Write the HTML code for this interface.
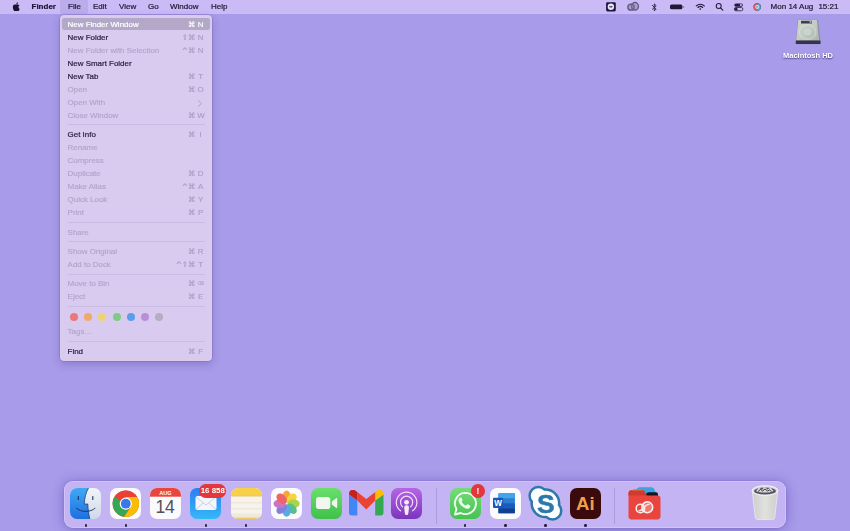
<!DOCTYPE html>
<html><head><meta charset="utf-8">
<style>
*{margin:0;padding:0;box-sizing:border-box}
html,body{width:850px;height:531px;overflow:hidden}
body{background:#a89bea;font-family:"Liberation Sans",sans-serif;position:relative;color:#241a3a}
#bar{position:absolute;left:0;top:0;width:850px;height:14px;background:#cabbf7}
#bar .m{position:absolute;top:0;height:14px;line-height:14px;font-size:8px;color:#1d1533;white-space:nowrap;-webkit-text-stroke:.2px #1d1533}
#bar .sel{position:absolute;left:59.800px;top:0;width:28.700px;height:14px;background:#bbadec;border-radius:0 0 2px 2px}
#menu{position:absolute;left:59.600px;top:15.300px;width:152.800px;height:345.300px;background:#d9caef;border-radius:4px;box-shadow:0 3px 8px rgba(60,40,120,.28),0 0 0 .5px rgba(90,70,150,.35)}
#menu .r{position:absolute;left:8px;right:8px;height:12px;line-height:12px;font-size:7.950px;color:#2a2040;white-space:nowrap;-webkit-text-stroke:.2px #2a2040}
#menu .r.d{color:#b0a4cb;-webkit-text-stroke:.15px #b0a4cb}
#menu .r .k{position:absolute;right:.2px;top:0;color:#a79bc4;-webkit-text-stroke:.12px #a79bc4;letter-spacing:.3px}
#menu .r .k .c{font-family:"DejaVu Sans",sans-serif;font-size:7.400px;position:relative;top:0;letter-spacing:0}
#menu .r .k .l{display:inline-block;width:7px;text-align:center;margin-left:1.800px;letter-spacing:0}
#menu .r .k .l.bs{font-family:"DejaVu Sans",sans-serif;font-size:4.600px;position:relative;top:-.6px}
#menu .r .ch{position:absolute;right:2.600px;top:2.700px;color:#a79bc4}
#menu .hlb{position:absolute;left:2.600px;right:2.400px;top:2.600px;height:12.300px;background:#b3a8c8;border-radius:2.500px}
#menu .r.hl{color:#fff;-webkit-text-stroke:.2px #fff}
#menu .r.hl .k{color:#fff;-webkit-text-stroke:.15px #fff}
#menu .s{position:absolute;left:8px;right:7px;height:1px;background:#c9bbe3}
.dot{position:absolute;width:8px;height:8px;border-radius:50%;top:297px}

#hdl{position:absolute;left:768px;width:80px;top:50px;text-align:center;font-size:7.500px;font-weight:bold;color:#fff;line-height:11px;text-shadow:0 .5px 1.5px rgba(40,30,90,.8)}
#dock{position:absolute;left:64px;top:481.200px;width:722.400px;height:46.600px;border-radius:9px;background:#c5b4f4;box-shadow:inset 0 0 0 .8px rgba(225,215,255,.55),0 0 0 .5px rgba(120,100,200,.35),0 1px 12px rgba(70,50,160,.48)}
#dk{position:absolute;left:0;top:0;width:850px;height:531px}
#dk .i{position:absolute;width:31px;height:31px;top:487.600px;border-radius:7px;overflow:hidden}
#dk .p{position:absolute;width:2.400px;height:2.400px;border-radius:50%;background:#2a2145;top:524.400px}
#dk .sp{position:absolute;width:1px;background:#ab9be0;top:487.500px;height:36px}
#bar,#menu,#dk,#hdl,#hdi{filter:blur(.35px)}
</style></head><body>
<div style="position:absolute;left:0;top:0;width:850px;height:13px;background:#cabbf7"></div>
<div id="bar">
<div class="sel"></div>
<svg style="position:absolute;left:11.500px;top:1.700px" width="8.500" height="9.600" viewBox="0 0 170 170" preserveAspectRatio="none"><path fill="#1a1330" d="M150.37 130.25c-2.45 5.66-5.35 10.87-8.71 15.66-4.58 6.53-8.33 11.05-11.22 13.56-4.48 4.12-9.28 6.23-14.42 6.35-3.69 0-8.14-1.05-13.32-3.18-5.197-2.12-9.973-3.17-14.34-3.17-4.58 0-9.492 1.05-14.746 3.17-5.262 2.13-9.501 3.24-12.742 3.35-4.929.21-9.842-1.96-14.746-6.52-3.13-2.73-7.045-7.41-11.735-14.04-5.032-7.08-9.169-15.29-12.41-24.65-3.471-10.11-5.211-19.9-5.211-29.378 0-10.857 2.346-20.221 7.045-28.068 3.693-6.303 8.606-11.275 14.755-14.925s12.793-5.51 19.948-5.629c3.915 0 9.049 1.211 15.429 3.591 6.362 2.388 10.447 3.599 12.238 3.599 1.339 0 5.877-1.416 13.57-4.239 7.275-2.618 13.415-3.702 18.445-3.275 13.63 1.1 23.87 6.473 30.68 16.153-12.19 7.386-18.22 17.731-18.1 31.002.11 10.337 3.86 18.939 11.23 25.769 3.34 3.17 7.07 5.62 11.22 7.36-.9 2.61-1.85 5.11-2.86 7.51zM119.11 7.24c0 8.102-2.96 15.667-8.86 22.669-7.12 8.324-15.732 13.134-25.071 12.375a25.222 25.222 0 0 1-.188-3.07c0-7.778 3.386-16.102 9.399-22.908 3.002-3.446 6.820-6.311 11.45-8.597 4.62-2.252 8.99-3.497 13.1-3.71.12 1.083.17 2.166.17 3.240z"/></svg>
<div class="m" style="left:31.5px;font-weight:bold">Finder</div>
<div class="m" style="left:68px">File</div>
<div class="m" style="left:93px">Edit</div>
<div class="m" style="left:119px">View</div>
<div class="m" style="left:148px">Go</div>
<div class="m" style="left:170px">Window</div>
<div class="m" style="left:211px">Help</div>
<!-- status icons -->
<svg style="position:absolute;left:600px;top:0" width="170" height="14" viewBox="600 0 170 14">
 <!-- teamviewer -->
 <rect x="606.100" y="2.200" width="9.700" height="9.200" rx="1.300" fill="#1d1740"/>
 <circle cx="610.900" cy="6.800" r="3.200" fill="#ece6fc"/>
 <path d="M609 6.800l1.300-1v.6h1.200v-.6l1.300 1-1.300 1v-.6h-1.200v.6z" fill="#1d1740"/>
 <!-- creative cloud -->
 <g fill="none" stroke="#625983" stroke-width="1.5"><ellipse cx="631" cy="7.200" rx="3.100" ry="2.900"/><ellipse cx="635" cy="6.300" rx="3.400" ry="3.700"/></g>
 <ellipse cx="633.200" cy="6.600" rx="5.600" ry="3.900" fill="#7d7399" opacity=".4"/>
 <!-- bluetooth -->
 <path d="M652.4 5.4l3.8 3.6-1.9 1.9V3.9l1.9 1.8-3.8 3.5" fill="none" stroke="#2a2246" stroke-width=".9" stroke-linejoin="round" stroke-linecap="round"/>
 <!-- battery -->
 <rect x="670" y="4.500" width="12.400" height="4.800" rx="1.500" fill="#1f1838"/>
 <rect x="683" y="5.900" width="1.200" height="2" rx=".5" fill="#8d82ae"/>
 <!-- wifi -->
 <g fill="none" stroke="#241c3e" stroke-width="1.15" stroke-linecap="round"><path d="M696.300 5.900a5.600 5.600 0 0 1 8 0"/><path d="M698 7.500a3.300 3.300 0 0 1 4.600 0"/></g>
 <circle cx="700.300" cy="9" r=".85" fill="#241c3e"/>
 <!-- search -->
 <circle cx="718.700" cy="6" r="2.500" fill="none" stroke="#241c3e" stroke-width="1.050"/>
 <path d="M720.500 7.900l2.300 2.300" stroke="#241c3e" stroke-width="1.2" stroke-linecap="round"/>
 <!-- control centre -->
 <rect x="734.3" y="3.4" width="8.6" height="3.3" rx="1.65" fill="#241c3e"/>
 <circle cx="740.9" cy="5.05" r="1.05" fill="#cbbdf6"/>
 <rect x="734.3" y="7.5" width="8.6" height="3.3" rx="1.65" fill="none" stroke="#241c3e" stroke-width=".8"/>
 <circle cx="736.2" cy="9.15" r="1.3" fill="#241c3e"/>
 <!-- siri -->
 <circle cx="757.2" cy="6.9" r="3.7" fill="#2a2b55"/>
 <path d="M753.7 6.9a3.5 3.5 0 0 1 3.5-3.5v7a3.5 3.5 0 0 1-3.500-3.500z" fill="#e8565f"/>
 <path d="M757.2 3.400a3.500 3.500 0 0 1 3.500 3.500 3.500 3.500 0 0 1-3.500 3.500z" fill="#39b8c8"/>
 <circle cx="757.2" cy="6.900" r="1.900" fill="#e9e4fa"/>
 <path d="M756.500 5.800l1.900 1.100-1.900 1.100z" fill="#3a78c8"/>
</svg>
<div class="m" style="left:770.6px">Mon 14 Aug</div>
<div class="m" style="left:818.4px">15:21</div>
</div>

<!-- desktop icon -->
<svg id="hdi" style="position:absolute;left:790px;top:16px" width="36" height="32" viewBox="790 16 36 32">
 <defs><linearGradient id="hdg" x1="0" y1="0" x2="1" y2="1"><stop offset="0" stop-color="#cdd5cd"/><stop offset=".5" stop-color="#c3ccc4"/><stop offset="1" stop-color="#a9b4ad"/></linearGradient></defs>
 <path d="M797.800 19.800h20.300l2.400 21.200v2.300a1 1 0 0 1-1 1h-22.700a1 1 0 0 1-1-1v-2.300z" fill="#8f8caa"/>
 <path d="M798.300 20.100h18.600l2.200 20.500h-22.900z" fill="url(#hdg)"/>
 <rect x="801" y="20.800" width="11" height="2.700" fill="#3f3d50"/>
 <rect x="809.500" y="21.300" width="2" height="1.300" fill="#d8d8e0"/>
 <ellipse cx="807.600" cy="32" rx="8.300" ry="7.300" fill="none" stroke="#e4eae4" stroke-width=".8" opacity=".7"/>
 <ellipse cx="807.600" cy="32" rx="3" ry="2.600" fill="#ccd4cd" stroke="#e6ece7" stroke-width=".5" opacity=".8"/>
 <rect x="795.800" y="40.500" width="24.700" height="3.600" rx=".6" fill="#35324c"/>
</svg>
<div id="hdl">Macintosh HD</div>
<!-- dock -->
<div id="dock"></div>
<div id="dk">
<!-- finder -->
<svg class="i" style="left:70.1px" viewBox="0 0 31 31">
 <defs><linearGradient id="fA" x1="0" y1="0" x2="0" y2="1"><stop offset="0" stop-color="#3fa9f5"/><stop offset="1" stop-color="#1f6fe0"/></linearGradient>
 <linearGradient id="fB" x1="0" y1="0" x2="0" y2="1"><stop offset="0" stop-color="#f2f4f8"/><stop offset="1" stop-color="#cfd9ea"/></linearGradient></defs>
 <rect width="31" height="31" fill="url(#fB)"/>
 <path d="M0 0h18.500c-2.500 4.500-4 10-4.300 16h3.600c.2 5 .8 10 2 15H0z" fill="url(#fA)"/>
 <path d="M18.500 0c-2.500 4.500-4 10-4.300 16h3.600c.2 5 .8 10 2 15" fill="none" stroke="#1c2f55" stroke-width=".7"/>
 <path d="M6.500 20.300c4.500 4.200 14 4.200 18.500 0" fill="none" stroke="#1c2f55" stroke-width=".9" stroke-linecap="round"/>
 <path d="M8.300 8.600v2.800M22.800 8.600v2.800" stroke="#1c2f55" stroke-width="1.100" stroke-linecap="round"/>
</svg>
<!-- chrome -->
<svg class="i" style="left:110.200px" viewBox="0 0 31 31">
 <rect width="31" height="31" fill="#fbfbfd"/>
 <g transform="translate(15.800 15.700)">
  <circle r="13.2" fill="#e94235"/>
  <path d="M0 0L-11.43 -6.60A13.2 13.2 0 0 0 -1.700 13.10L5.200 3z" fill="#34a853"/>
  <path d="M0 0L5.200 3-1.700 13.10A13.2 13.2 0 0 0 11.43 -6.60H0z" fill="#fbbc04"/>
  <path d="M-11.43 -6.60A13.2 13.2 0 0 1 11.43 -6.60H0z" fill="#e94235"/>
  <circle r="6.100" fill="#fff"/>
  <circle r="4.900" fill="#3b78e7"/>
 </g>
</svg>
<!-- calendar -->
<svg class="i" style="left:150.200px" viewBox="0 0 31 31">
 <rect width="31" height="31" fill="#fbfafc"/>
 <rect width="31" height="8.700" fill="#e8453f"/>
 <text x="15.500" y="7" font-family="Liberation Sans, sans-serif" font-weight="bold" font-size="5.600" fill="#fff" text-anchor="middle">AUG</text>
 <text x="15" y="25" font-family="Liberation Sans, sans-serif" font-size="17.500" fill="#505056" text-anchor="middle" letter-spacing="-.2">14</text>
</svg>
<!-- mail -->
<svg class="i" style="left:190.400px" viewBox="0 0 31 31">
 <defs><linearGradient id="mA" x1="0" y1="0" x2="0" y2="1"><stop offset="0" stop-color="#2e7df0"/><stop offset="1" stop-color="#35b8f8"/></linearGradient></defs>
 <rect width="31" height="31" fill="url(#mA)"/>
 <rect x="5.500" y="8" width="21" height="14" rx="2" fill="#f4f6fb"/>
 <path d="M6 9l10 8 10-8M6 21.500l7-6.500M26 21.500l-7-6.500" fill="none" stroke="#b9c6dc" stroke-width=".8"/>
</svg>
<div style="position:absolute;left:199.300px;top:484.400px;width:27px;height:13.600px;border-radius:6.800px;background:#e1373d;color:#fff;font-size:7.900px;font-weight:bold;line-height:13.800px;text-align:center;letter-spacing:0">16 858</div>
<!-- notes -->
<svg class="i" style="left:231px" viewBox="0 0 31 31">
 <rect width="31" height="31" fill="#f7f3ea"/>
 <rect width="31" height="8" fill="#f8cf48"/>
 <path d="M0 8.200h31" stroke="#e3c45a" stroke-width=".6"/>
 <path d="M0 14.800h31M0 20.800h31" stroke="#dcd6c8" stroke-width=".6"/>
 <rect y="25.500" width="31" height="5.500" fill="#efe9dc"/>
 <rect y="29.600" width="31" height="1.400" fill="#eccb62"/>
</svg>
<!-- photos -->
<svg class="i" style="left:270.800px" viewBox="0 0 31 31">
 <rect width="31" height="31" fill="#fbfbfd"/>
 <g transform="translate(15.600 15.700)" opacity=".93">
  <ellipse cx="0" cy="-7" rx="4.200" ry="6.100" fill="#f6a02c"/>
  <ellipse cx="0" cy="-7" rx="4.200" ry="6.100" fill="#f3d230" transform="rotate(45)"/>
  <ellipse cx="0" cy="-7" rx="4.200" ry="6.100" fill="#a5cf3c" transform="rotate(90)"/>
  <ellipse cx="0" cy="-7" rx="4.200" ry="6.100" fill="#4dbb7c" transform="rotate(135)"/>
  <ellipse cx="0" cy="-7" rx="4.200" ry="6.100" fill="#4aa5e0" transform="rotate(180)"/>
  <ellipse cx="0" cy="-7" rx="4.200" ry="6.100" fill="#7a78d8" transform="rotate(225)"/>
  <ellipse cx="0" cy="-7" rx="4.200" ry="6.100" fill="#c56bc0" transform="rotate(270)"/>
  <ellipse cx="0" cy="-7" rx="4.200" ry="6.100" fill="#ec5b5b" transform="rotate(315)"/>
 </g>
</svg>
<!-- facetime -->
<svg class="i" style="left:310.900px" viewBox="0 0 31 31">
 <defs><linearGradient id="ftA" x1="0" y1="0" x2="0" y2="1"><stop offset="0" stop-color="#6adf6c"/><stop offset="1" stop-color="#3fc14a"/></linearGradient></defs>
 <rect width="31" height="31" fill="url(#ftA)"/>
 <rect x="5" y="9" width="14.300" height="12" rx="2.800" fill="#f1f7ef"/>
 <path d="M20.800 13.600l4.300-3.300c.6-.4 1.100-.1 1.100.6v8.200c0 .7-.5 1-1.100.6l-4.300-3.300z" fill="#f1f7ef"/>
</svg>
<!-- gmail -->
<svg style="position:absolute;left:349.300px;top:490px" width="34.500" height="25.500" viewBox="0 0 34.500 25.500">
 <path d="M0 4.500v18.600a2.400 2.400 0 0 0 2.400 2.400h5.900V10.600z" fill="#4285f4"/>
 <path d="M34.500 4.500v18.600a2.400 2.400 0 0 1-2.400 2.400h-5.900V10.600z" fill="#34a853"/>
 <path d="M26.200 1.900v8.700l8.300-6.100V3.600c0-3.200-3.700-5-6.200-3.100z" fill="#fbbc04"/>
 <path d="M8.300 10.600V1.900l8.950 7 8.950-7v8.700l-8.950 8.800z" fill="#ea4335"/>
 <path d="M0 3.600v.9l8.300 6.100V1.900L6.200.5C3.700-1.400 0 .4 0 3.600z" fill="#c5221f"/>
</svg>
<!-- podcasts -->
<svg class="i" style="left:391.300px" viewBox="0 0 31 31">
 <defs><linearGradient id="pA" x1="0" y1="0" x2="0" y2="1"><stop offset="0" stop-color="#b764e6"/><stop offset="1" stop-color="#7b35bd"/></linearGradient></defs>
 <rect width="31" height="31" fill="url(#pA)"/>
 <g fill="none" stroke="#f0dcf8" stroke-width="1.250" stroke-linecap="round">
  <path d="M9.600 22.800a10.300 10.300 0 1 1 12 0"/>
  <path d="M11.500 18.800a6.100 6.100 0 1 1 8.200 0"/>
 </g>
 <circle cx="15.600" cy="14.300" r="2.400" fill="#f6ecfb"/>
 <path d="M13.200 19.600a2.400 2.400 0 0 1 4.800 0l-.7 5.800a1.700 1.700 0 0 1-3.400 0z" fill="#f6ecfb"/>
</svg>
<div class="sp" style="left:436.400px"></div>
<!-- whatsapp -->
<svg class="i" style="left:449.800px;top:488px" viewBox="0 0 31 31">
 <defs><linearGradient id="wA" x1="0" y1="0" x2="0" y2="1"><stop offset="0" stop-color="#74dc78"/><stop offset="1" stop-color="#46c352"/></linearGradient></defs>
 <rect width="31" height="31" fill="url(#wA)"/>
 <g transform="translate(15.500 15.500) scale(1.090) translate(-15.700 -15.300)"><path d="M15.700 5.600a9.700 9.700 0 0 0-8.300 14.700L6 25.400l5.300-1.400a9.700 9.700 0 1 0 4.400-18.400z" fill="none" stroke="#f2fbf1" stroke-width="1.700" stroke-linejoin="round"/>
 <path d="M12.300 10.600c-.4-.8-.7-.8-1.100-.8-.9 0-1.900 1-1.900 2.600 0 2.700 3.500 6.800 7.300 7.700 1.600.4 3-.5 3.400-1.600.2-.6.200-1 .1-1.200-.3-.4-2.200-1.300-2.600-1.300-.5 0-.8 1.100-1.300 1.200-.8.100-3.600-2.100-4-3.500-.1-.5.800-.9.800-1.500 0-.3-.5-1.200-.7-1.600z" fill="#f2fbf1"/></g>
</svg>
<div style="position:absolute;left:471px;top:484.200px;width:14px;height:14px;border-radius:7px;background:#e1373d;color:#fff;font-size:8.500px;font-weight:bold;line-height:14px;text-align:center">!</div>
<!-- word -->
<svg class="i" style="left:489.700px" viewBox="0 0 31 31">
 <rect width="31" height="31" fill="#fbfbfd"/>
 <rect x="8.400" y="5.300" width="16.500" height="20" rx="1.200" fill="#2b7cd3"/>
 <rect x="8.400" y="5.300" width="16.500" height="5" fill="#41a5ee"/>
 <rect x="8.400" y="15.300" width="16.500" height="5" fill="#185abd"/>
 <rect x="8.400" y="20.300" width="16.500" height="5" fill="#103f91"/>
 <rect x="3" y="9.800" width="10.200" height="10.200" rx="1" fill="#1b55b5"/>
 <text x="8.100" y="17.800" font-family="Liberation Sans, sans-serif" font-weight="bold" font-size="8.200" fill="#fff" text-anchor="middle">W</text>
</svg>
<!-- skype -->
<svg style="position:absolute;left:525px;top:483px" width="40" height="40" viewBox="525 483 40 40">
 <g fill="#2b78aa"><circle cx="545.400" cy="503.300" r="15"/><circle cx="538.300" cy="495.800" r="10"/><circle cx="552.500" cy="510.800" r="10"/></g>
 <g fill="#fcfdfe"><circle cx="545.400" cy="503.300" r="12.500"/><circle cx="538.300" cy="495.800" r="7.500"/><circle cx="552.500" cy="510.800" r="7.500"/></g>
 <text x="545.900" y="512.600" font-family="Liberation Sans, sans-serif" font-weight="bold" font-size="26.500" fill="#2b78aa" stroke="#2b78aa" stroke-width=".5" text-anchor="middle">S</text>
</svg>
<!-- illustrator -->
<svg class="i" style="left:570.400px;top:488px" viewBox="0 0 31 31">
 <rect width="31" height="31" fill="#3a0a0c"/>
 <text x="15.300" y="22" font-family="Liberation Sans, sans-serif" font-weight="bold" font-size="18.600" fill="#f0a046" text-anchor="middle">Ai</text>
</svg>
<div class="sp" style="left:614.300px"></div>
<!-- cc folder -->
<svg style="position:absolute;left:627.500px;top:486.500px" width="33" height="33" viewBox="0 0 33 33">
 <path d="M7.500 4c1-2.400 2.400-3.700 4.500-3.700h11c2 0 3 1 3.600 2.500l1.800 4.200H7.500z" fill="#3aa2dd"/>
 <path d="M17.500 7.800c.8-1.800 1.800-2.600 3.500-2.600h7c1.200 0 2 .9 2 2v3H17.500z" fill="#17161c"/>
 <path d="M.5 6c0-1.600 1.300-2.900 2.900-2.900h10.600c1.300 0 2 .5 2.700 1.500l2.200 3.900h11c1.600 0 2.600 1.300 2.600 2.900v18.200c0 1.600-1.300 2.900-2.900 2.900H3.400c-1.600 0-2.900-1.300-2.900-2.900z" fill="#e9443d"/>
 <path d="M3.500 4.500c.6-1.500 1.600-2.200 3-2.200h5.500c1.300 0 2 .5 2.700 1.500l1 1.800H3.500z" fill="#e27a35"/>
 <path d="M.5 8.500V6.500c0-1.600 1.300-2.900 2.900-2.900h10.600c1.300 0 2 .5 2.700 1.500l1.900 3.400z" fill="#cf3b31"/>
 <circle cx="19.300" cy="20.300" r="5.400" fill="#f3a49e" opacity=".55"/>
 <g fill="none" stroke="#fdeeee" stroke-width="1.600"><circle cx="12.400" cy="21.400" r="4.200"/><circle cx="19.300" cy="20.300" r="5.400"/><path d="M10.500 23.500c2.500.5 4-1 5.500-3s3-3.500 5.500-3" stroke-width="1.300"/></g>
</svg>
<!-- trash -->
<svg style="position:absolute;left:750px;top:483px" width="30" height="38" viewBox="0 0 30 38">
 <defs><linearGradient id="tA" x1="0" y1="0" x2="1" y2="0"><stop offset="0" stop-color="#cfd0c8"/><stop offset=".5" stop-color="#e3e4dc"/><stop offset="1" stop-color="#cfd0c8"/></linearGradient></defs>
 <path d="M2.200 7.500L5.200 34.200c.2 1.600 1.400 2.400 3 2.400h13.600c1.600 0 2.800-.8 3-2.400L27.800 7.500z" fill="url(#tA)" stroke="#f4f4f8" stroke-width=".7" opacity=".93"/>
 <ellipse cx="15" cy="7.500" rx="12.900" ry="4.800" fill="#d9dade" stroke="#f6f6fa" stroke-width=".9"/>
 <ellipse cx="15" cy="8" rx="11" ry="3.600" fill="#55545e"/>
 <path d="M6 8l3-3.500 3 2.500 2.500-3.500 3 3 3-2 3 3.500c-3 2-14 2-17.500 0z" fill="#d6d6dc"/>
 <path d="M8 8.500l2.500-2 2 1.500 2.500-2 2.500 2 2-1 2 1.500" fill="none" stroke="#3d3c48" stroke-width="1"/>
</svg>
<!-- indicators -->
<div class="p" style="left:84.500px"></div>
<div class="p" style="left:124.600px"></div>
<div class="p" style="left:204.600px"></div>
<div class="p" style="left:244.600px"></div>
<div class="p" style="left:464.100px"></div>
<div class="p" style="left:504.200px"></div>
<div class="p" style="left:544.200px"></div>
<div class="p" style="left:584.300px"></div>

</div>
<div id="menu">
<div class="hlb"></div>
<div class="r hl" style="top:3.70px">New Finder Window<span class="k"><span class="c">⌘</span><span class="l">N</span></span></div>
<div class="r " style="top:16.70px">New Folder<span class="k"><span class="c">⇧⌘</span><span class="l">N</span></span></div>
<div class="r d" style="top:29.70px">New Folder with Selection<span class="k"><span class="c">^⌘</span><span class="l">N</span></span></div>
<div class="r " style="top:42.70px">New Smart Folder</div>
<div class="r " style="top:55.70px">New Tab<span class="k"><span class="c">⌘</span><span class="l">T</span></span></div>
<div class="r d" style="top:68.70px">Open<span class="k"><span class="c">⌘</span><span class="l">O</span></span></div>
<div class="r d" style="top:81.70px">Open With<svg class="ch" width="4" height="7" viewBox="0 0 4 7"><path d="M.7 .7L3.200 3.500.7 6.300" fill="none" stroke="currentColor" stroke-width=".9" stroke-linecap="round" stroke-linejoin="round"/></svg></div>
<div class="r d" style="top:94.70px">Close Window<span class="k"><span class="c">⌘</span><span class="l">W</span></span></div>
<div class="r " style="top:113.70px">Get Info<span class="k"><span class="c">⌘</span><span class="l">I</span></span></div>
<div class="r d" style="top:126.70px">Rename</div>
<div class="r d" style="top:139.70px">Compress</div>
<div class="r d" style="top:152.70px">Duplicate<span class="k"><span class="c">⌘</span><span class="l">D</span></span></div>
<div class="r d" style="top:165.70px">Make Alias<span class="k"><span class="c">^⌘</span><span class="l">A</span></span></div>
<div class="r d" style="top:178.70px">Quick Look<span class="k"><span class="c">⌘</span><span class="l">Y</span></span></div>
<div class="r d" style="top:191.70px">Print<span class="k"><span class="c">⌘</span><span class="l">P</span></span></div>
<div class="r d" style="top:211.70px">Share</div>
<div class="r d" style="top:230.70px">Show Original<span class="k"><span class="c">⌘</span><span class="l">R</span></span></div>
<div class="r d" style="top:243.70px">Add to Dock<span class="k"><span class="c">^⇧⌘</span><span class="l">T</span></span></div>
<div class="r d" style="top:262.70px">Move to Bin<span class="k"><span class="c">⌘</span><span class="l bs">⌫</span></span></div>
<div class="r d" style="top:275.70px">Eject<span class="k"><span class="c">⌘</span><span class="l">E</span></span></div>
<div class="r d" style="top:310.70px">Tags…</div>
<div class="r " style="top:330.70px">Find<span class="k"><span class="c">⌘</span><span class="l">F</span></span></div>
<div class="s" style="top:108.4px"></div>
<div class="s" style="top:206.3px"></div>
<div class="s" style="top:226.0px"></div>
<div class="s" style="top:258.8px"></div>
<div class="s" style="top:290.7px"></div>
<div class="s" style="top:325.4px"></div>
<div class="dot" style="left:10.7px;top:297.8px;background:#e8787a"></div>
<div class="dot" style="left:24.8px;top:297.8px;background:#eeaa6c"></div>
<div class="dot" style="left:38.9px;top:297.8px;background:#ecd46e"></div>
<div class="dot" style="left:53.0px;top:297.8px;background:#7fcb86"></div>
<div class="dot" style="left:67.1px;top:297.8px;background:#5b9cec"></div>
<div class="dot" style="left:81.2px;top:297.8px;background:#b98fdc"></div>
<div class="dot" style="left:95.3px;top:297.8px;background:#b5adc4"></div>
</div>
</body></html>
